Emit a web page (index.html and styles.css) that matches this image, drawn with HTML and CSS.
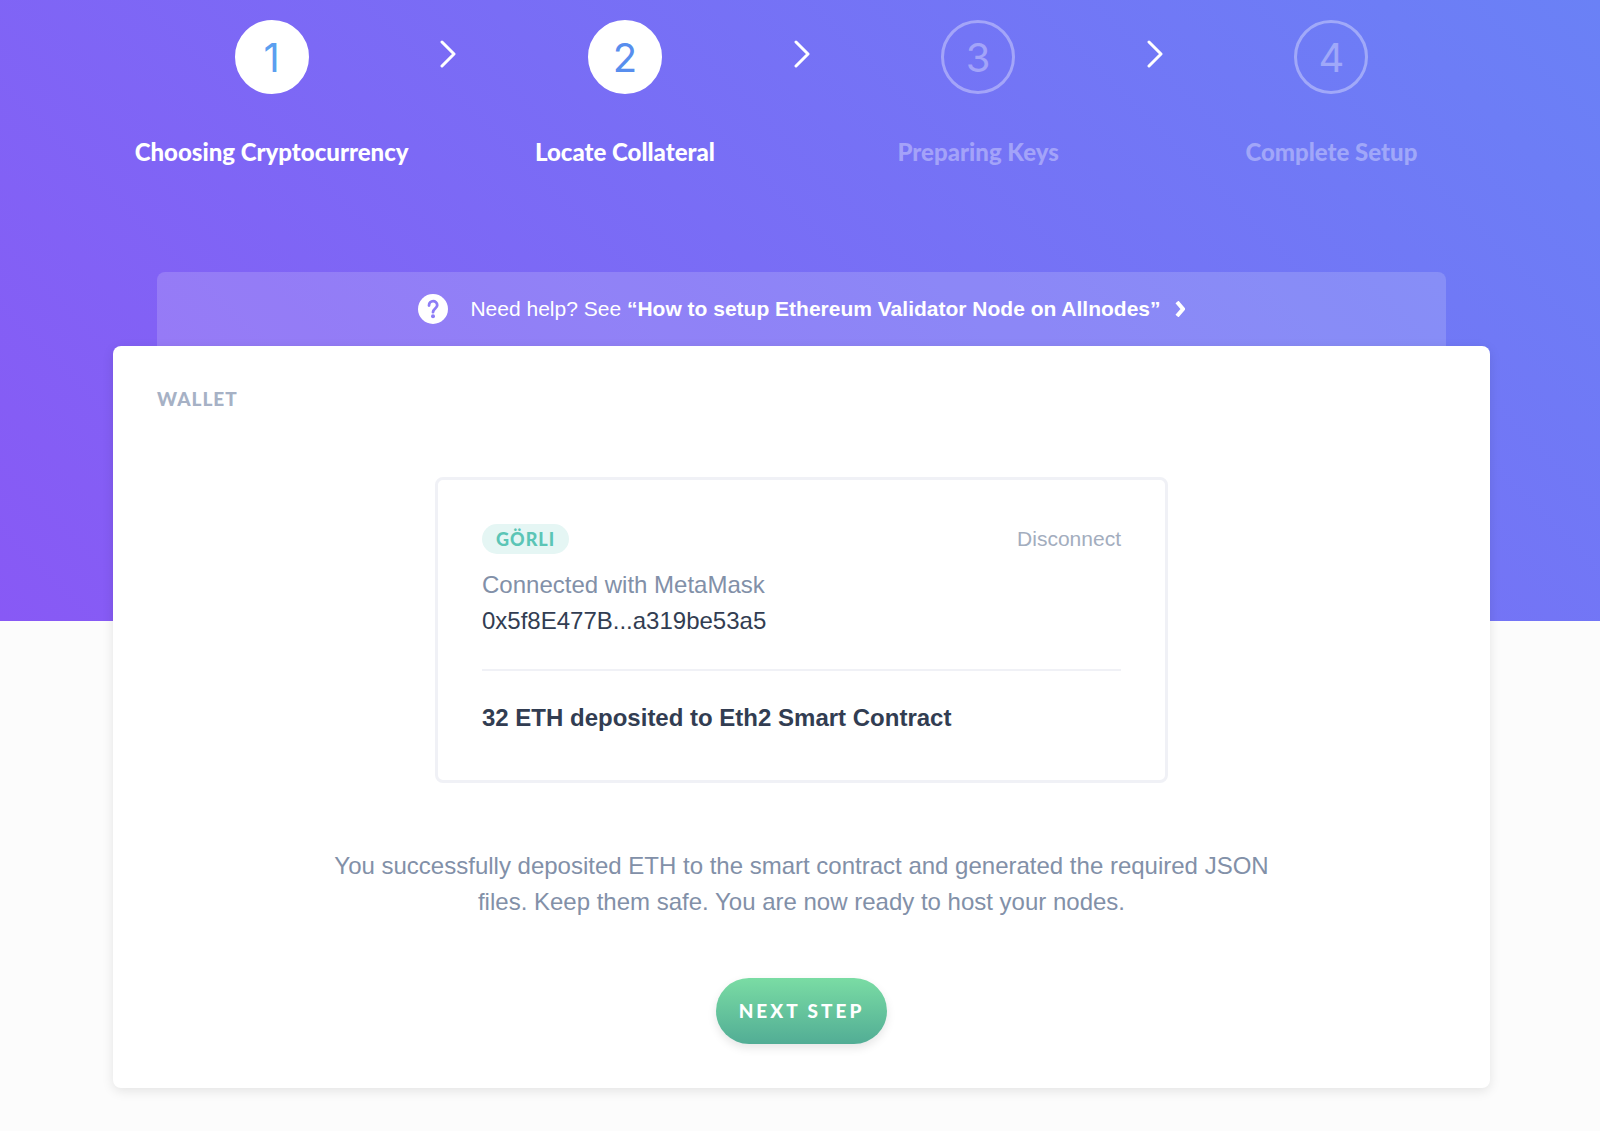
FILE: index.html
```html
<!DOCTYPE html>
<html lang="en">
<head>
    <meta charset="UTF-8">
    <meta name="viewport" content="width=device-width, initial-scale=1.0">
    <title>Locate Collateral</title>
    <link rel="stylesheet" href="styles.css">
</head>
<body>
    <header class="hero">
        <ol class="steps">
            <li class="step done">
                <span class="number">1</span>
                <span class="label">Choosing Cryptocurrency</span>
            </li>
            <li class="arrow" aria-hidden="true">
                <svg width="16" height="28" viewBox="0 0 16 28"><path d="M2 2 L14 14 L2 26"/></svg>
            </li>
            <li class="step current" aria-current="step">
                <span class="number">2</span>
                <span class="label">Locate Collateral</span>
            </li>
            <li class="arrow" aria-hidden="true">
                <svg width="16" height="28" viewBox="0 0 16 28"><path d="M2 2 L14 14 L2 26"/></svg>
            </li>
            <li class="step">
                <span class="number">3</span>
                <span class="label">Preparing Keys</span>
            </li>
            <li class="arrow" aria-hidden="true">
                <svg width="16" height="28" viewBox="0 0 16 28"><path d="M2 2 L14 14 L2 26"/></svg>
            </li>
            <li class="step">
                <span class="number">4</span>
                <span class="label">Complete Setup</span>
            </li>
        </ol>
        <a class="help" href="#">
            <svg class="help-icon" width="30" height="30" viewBox="0 0 30 30">
                <circle cx="15" cy="15" r="15" fill="#fff"/>
                <path d="M11 11.5 C11 5.8 19.2 5.8 19.2 11.3 C19.2 14.4 15 14.6 15 18.2" fill="none" stroke="#8d7df6" stroke-width="2.8" stroke-linecap="round"/>
                <circle cx="15" cy="22.3" r="2" fill="#8d7df6"/>
            </svg>
            <span>Need help? See <strong>“How to setup Ethereum Validator Node on Allnodes”</strong></span>
            <svg class="help-arrow" width="10" height="16" viewBox="0 0 10 16"><path d="M2 1 L8 8 L2 15"/></svg>
        </a>
    </header>

    <main class="card">
        <h2>WALLET</h2>
        <section class="wallet">
            <div class="wallet-top">
                <span class="badge">GÖRLI</span>
                <button type="button" class="disconnect">Disconnect</button>
            </div>
            <p class="provider">Connected with MetaMask</p>
            <p class="address">0x5f8E477B...a319be53a5</p>
            <p class="deposit">32 ETH deposited to Eth2 Smart Contract</p>
        </section>
        <p class="message">You successfully deposited ETH to the smart contract and generated the required JSON files. Keep them safe. You are now ready to host your nodes.</p>
        <button type="button" class="next">NEXT STEP</button>
    </main>
</body>
</html>
```
FILE: styles.css
```css
* {
    box-sizing: border-box;
}

body {
    margin: 0;
    padding-bottom: 43px;
    background-color: #fcfcfc;
    font-family: "Liberation Sans", Arial, sans-serif;
    font-size: 24px;
    line-height: 36px;
    color: #323d52;
}

h2, p {
    margin: 0;
}

button {
    border: none;
    cursor: pointer;
}

/* Purple header, the card is pulled up over its lower part */
.hero {
    padding: 20px 110px 275px 113px;
    background: linear-gradient(45deg, #8859f5, #6a81f6);
}

.steps {
    display: flex;
    margin: 0 -10px;
    padding: 0;
    list-style: none;
}

.step {
    flex: 1 1 0;
    display: flex;
    flex-direction: column;
    align-items: center;
    color: rgba(255, 255, 255, 0.35);
}

.number {
    width: 74px;
    height: 74px;
    border: 3px solid rgba(255, 255, 255, 0.35);
    border-radius: 50%;
    font-family: Inter, sans-serif;
    font-size: 40px;
    line-height: 70px;
    text-align: center;
}

.label {
    margin-top: 40px;
    font-family: Lato, sans-serif;
    font-weight: 900;
    white-space: nowrap;
}

.step.done, .step.current {
    color: #fff;
}

.done .number, .current .number {
    border-color: #fff;
    background-color: #fff;
    color: #5b9ff0;
}

.current .number {
    color: #588eee;
}

.arrow {
    width: 16px;
    padding-top: 20px;
    line-height: 0;
}

.arrow path, .help-arrow path {
    fill: none;
    stroke: #fff;
    stroke-width: 3;
    stroke-linecap: round;
    stroke-linejoin: round;
}

.help {
    display: flex;
    justify-content: center;
    align-items: center;
    height: 74px;
    margin: 102px 44px 0;
    border-radius: 8px 8px 0 0;
    background-color: rgba(255, 255, 255, 0.16);
    color: #fff;
    font-size: 21px;
    text-decoration: none;
}

.help-icon {
    margin-right: 22px;
}

.help-arrow {
    margin-left: 14px;
}

.help-arrow path {
    stroke-width: 4;
    stroke-linecap: butt;
    stroke-linejoin: miter;
}

.card {
    display: flex;
    flex-direction: column;
    align-items: center;
    margin: -275px 110px 0 113px;
    padding: 35px 44px 44px;
    border-radius: 8px;
    background-color: #fff;
    box-shadow: 0 3px 12px rgba(0, 0, 0, 0.1);
}

h2 {
    align-self: flex-start;
    font-family: Lato, sans-serif;
    font-size: 19px;
    font-weight: 900;
    letter-spacing: 1px;
    color: #a6b1c5;
}

.wallet {
    width: 100%;
    max-width: 733px;
    margin-top: 60px;
    padding: 44px;
    border: 3px solid #f0f1f6;
    border-radius: 8px;
}

.wallet-top {
    display: flex;
    justify-content: space-between;
    align-items: center;
    margin-bottom: 13px;
}

.badge {
    padding: 0 14px;
    border-radius: 15px;
    background-color: #e5f6f4;
    color: #5bc5b6;
    font-family: Lato, sans-serif;
    font-size: 18px;
    font-weight: 900;
    line-height: 30px;
    letter-spacing: 1px;
}

.disconnect {
    padding: 0;
    background: none;
    color: #a3adbe;
    font-family: inherit;
    font-size: 21px;
    line-height: 30px;
}

.provider {
    color: #8290a8;
}

.deposit {
    margin-top: 30px;
    padding-top: 29px;
    border-top: 2px solid #f0f1f6;
    font-weight: bold;
}

.message {
    max-width: 960px;
    margin-top: 65px;
    color: #8290a8;
    text-align: center;
}

.next {
    margin-top: 58px;
    padding: 0 23px;
    border-radius: 33px;
    background: linear-gradient(#7adca4, #52ad95);
    box-shadow: 0 4px 10px rgba(0, 0, 0, 0.1);
    color: #fff;
    font-family: Lato, sans-serif;
    font-size: 19px;
    font-weight: 900;
    line-height: 66px;
    letter-spacing: 3px;
}
```
